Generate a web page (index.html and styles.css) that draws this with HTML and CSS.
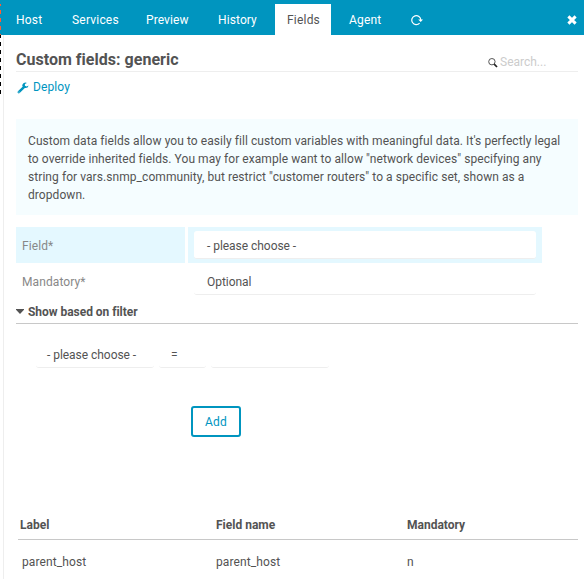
FILE: index.html
```html
<!DOCTYPE html>
<html lang="en">
<head>
<meta charset="utf-8">
<title>Custom fields: generic</title>
<link rel="stylesheet" href="styles.css">
</head>
<body>
<div class="resize-edge"></div>
<nav class="tabs">
  <a class="tab host">Host</a>
  <a class="tab services">Services</a>
  <a class="tab preview">Preview</a>
  <a class="tab history">History</a>
  <a class="tab fields active">Fields</a>
  <a class="tab agent">Agent</a>
  <a class="tab refresh" aria-label="Refresh"><svg width="12" height="12" viewBox="0 0 12 12"><path d="M8.6 9.2A4.5 4.5 0 1 1 9.8 6" fill="none" stroke="currentColor" stroke-width="1.2"/><path d="M7.2 5.4h4.8L9.7 8z" fill="currentColor"/></svg></a>
  <a class="tab close" aria-label="Close"><svg width="10" height="10" viewBox="0 0 10 10"><path d="M1.4 1.4l7.2 7.2M8.6 1.4L1.4 8.6" stroke="currentColor" stroke-width="3" fill="none"/></svg></a>
</nav>
<main class="panel">
  <header class="heading">
    <h1>Custom fields: generic</h1>
    <div class="search"><svg width="10" height="10" viewBox="0 0 10 10"><circle cx="3.9" cy="3.7" r="3.2" fill="none" stroke="#555" stroke-width="1"/><path d="M6.2 6.1L9 9" stroke="#222" stroke-width="1.7"/></svg><span>Search...</span></div>
  </header>
  <a class="deploy"><svg width="12" height="12" viewBox="0 0 12 12"><path d="M1.8 10.2L7.2 4.9" stroke="currentColor" stroke-width="2.5" stroke-linecap="round"/><path d="M9.9.9A3.3 3.3 0 0 0 5.2 3.8 3.3 3.3 0 0 0 11.6 3.4L9.6 4.6 7.9 3.7V2.1z" fill="currentColor"/><circle cx="2" cy="10" r=".5" fill="#fff"/></svg><span>Deploy</span></a>
  <p class="hint">Custom data fields allow you to easily fill custom variables with meaningful data. It's perfectly legal to override inherited fields. You may for example want to allow "network devices" specifying any string for vars.snmp_community, but restrict "customer routers" to a specific set, shown as a dropdown.</p>
  <form>
    <div class="row focused"><label>Field*</label><div class="value"><div class="select">- please choose -</div></div></div>
    <div class="row"><label>Mandatory*</label><div class="value"><div class="select">Optional</div></div></div>
    <h2 class="legend"><i class="caret"></i>Show based on filter</h2>
    <div class="filter">
      <div class="select column">- please choose -</div>
      <div class="select operator">=</div>
      <div class="select term"></div>
    </div>
    <button type="button" class="add">Add</button>
  </form>
  <table>
    <thead><tr><th>Label</th><th>Field name</th><th>Mandatory</th></tr></thead>
    <tbody><tr><td>parent_host</td><td>parent_host</td><td>n</td></tr></tbody>
  </table>
</main>
</body>
</html>
```

FILE: styles.css
```css
* { box-sizing: border-box; }
body {
  margin: 0;
  height: 579px;
  overflow: hidden;
  background: #fff;
  color: #535353;
  font: 12px/18px Roboto, sans-serif;
  letter-spacing: 0.1px;
}
.resize-edge {
  position: absolute;
  left: 0;
  top: 0;
  width: 1px;
  height: 94px;
  background:
    linear-gradient(#0095bf, #0095bf) 0 0 / 1px 4px no-repeat,
    repeating-linear-gradient(transparent 0 2px, #ff5c33 2px 6px, #0095bf 6px 8px, #0095bf 8px 8px) 0 0 / 1px 35px no-repeat,
    linear-gradient(#0095bf, #0095bf) 0 0 / 1px 35px no-repeat,
    repeating-linear-gradient(transparent 0 2px, #000 2px 6px, transparent 6px 8px);
}
.tabs {
  display: flex;
  height: 35px;
  padding: 4px 7px 0 4px;
  background: #0095bf;
  color: #fff;
  letter-spacing: 0.2px;
}
.tab { height: 31px; padding: 7px 0 0 12px; }
.host { width: 56px; }
.services { width: 74px; }
.preview { width: 72px; letter-spacing: 0.1px; }
.history { width: 69px; letter-spacing: 0.1px; }
.fields { width: 56px; }
.agent { width: 62px; padding-left: 18px; }
.refresh { width: 40px; padding-left: 18px; }
.tab svg { display: block; margin-top: 3px; }
.close { margin-left: auto; padding: 8px 0 0; }
.active { background: #fff; color: #535353; }
.panel {
  height: 544px;
  margin-left: 3px;
  padding: 10px 6px 0 12px;
  border-left: 1px solid #eee;
}
.heading {
  display: flex;
  justify-content: space-between;
  height: 27px;
  border-bottom: 1px solid #eee;
}
h1 { margin: 3px 0 0; font-size: 16px; line-height: 24px; letter-spacing: 0.02px; }
.search {
  display: flex;
  width: 90px;
  padding-top: 8px;
  gap: 2px;
  color: #ccc;
  letter-spacing: 0;
}
.search svg { margin-top: 5px; }
.deploy { display: flex; gap: 4px; margin: 6px 0 0 1px; color: #0095bf; }
.deploy svg { margin-top: 4px; }
.hint {
  height: 96px;
  margin: 23px 0 12px;
  padding: 13px 12px 0;
  background: #f5fdff;
  letter-spacing: 0.065px;
}
.row { display: grid; grid-template-columns: 169px 354px; gap: 3px; height: 36px; }
.row label { padding: 10px 6px 0; color: #888; }
.row .value { padding: 4px 6px 0; }
.focused label, .focused .value { background: #e4f8ff; }
.select {
  height: 28px;
  padding: 6px 13px 0;
  border-bottom: 1px solid #eee;
  border-radius: 3px;
  background: #fff;
  letter-spacing: -0.04px;
}
.legend {
  display: flex;
  height: 25px;
  margin: 0;
  padding-top: 4px;
  border-bottom: 1px solid #c8c8c8;
  font-size: 12px;
  line-height: 18px;
  letter-spacing: -0.04px;
}
.caret {
  width: 8px;
  height: 5px;
  margin: 6px 4px 0 0;
  background: #535353;
  clip-path: polygon(0 0, 100% 0, 100% 15%, 50% 100%, 0 15%);
}
.filter { display: flex; gap: 5px; padding: 16px 0 0 20px; }
.filter .select { padding-left: 11px; }
.filter .column { width: 118px; }
.filter .operator { width: 47px; padding-left: 12px; }
.filter .term { width: 118px; }
.add {
  display: block;
  width: 50px;
  height: 31px;
  margin: 38px 0 0 175px;
  padding: 0;
  border: 2px solid #0095bf;
  border-radius: 3px;
  background: #fff;
  color: #0095bf;
  font: inherit;
  letter-spacing: 0.2px;
}
table {
  width: 560px;
  margin: 73px 0 0 2px;
  border-collapse: collapse;
  table-layout: fixed;
}
th { height: 29px; padding: 2px 2px 0; border-bottom: 1px solid #c8c8c8; text-align: left; letter-spacing: 0; }
th:nth-child(1) { width: 196px; }
th:nth-child(2) { width: 191px; }
td { height: 45px; padding: 0 2px; }
td:first-child { padding-left: 4px; }
```
